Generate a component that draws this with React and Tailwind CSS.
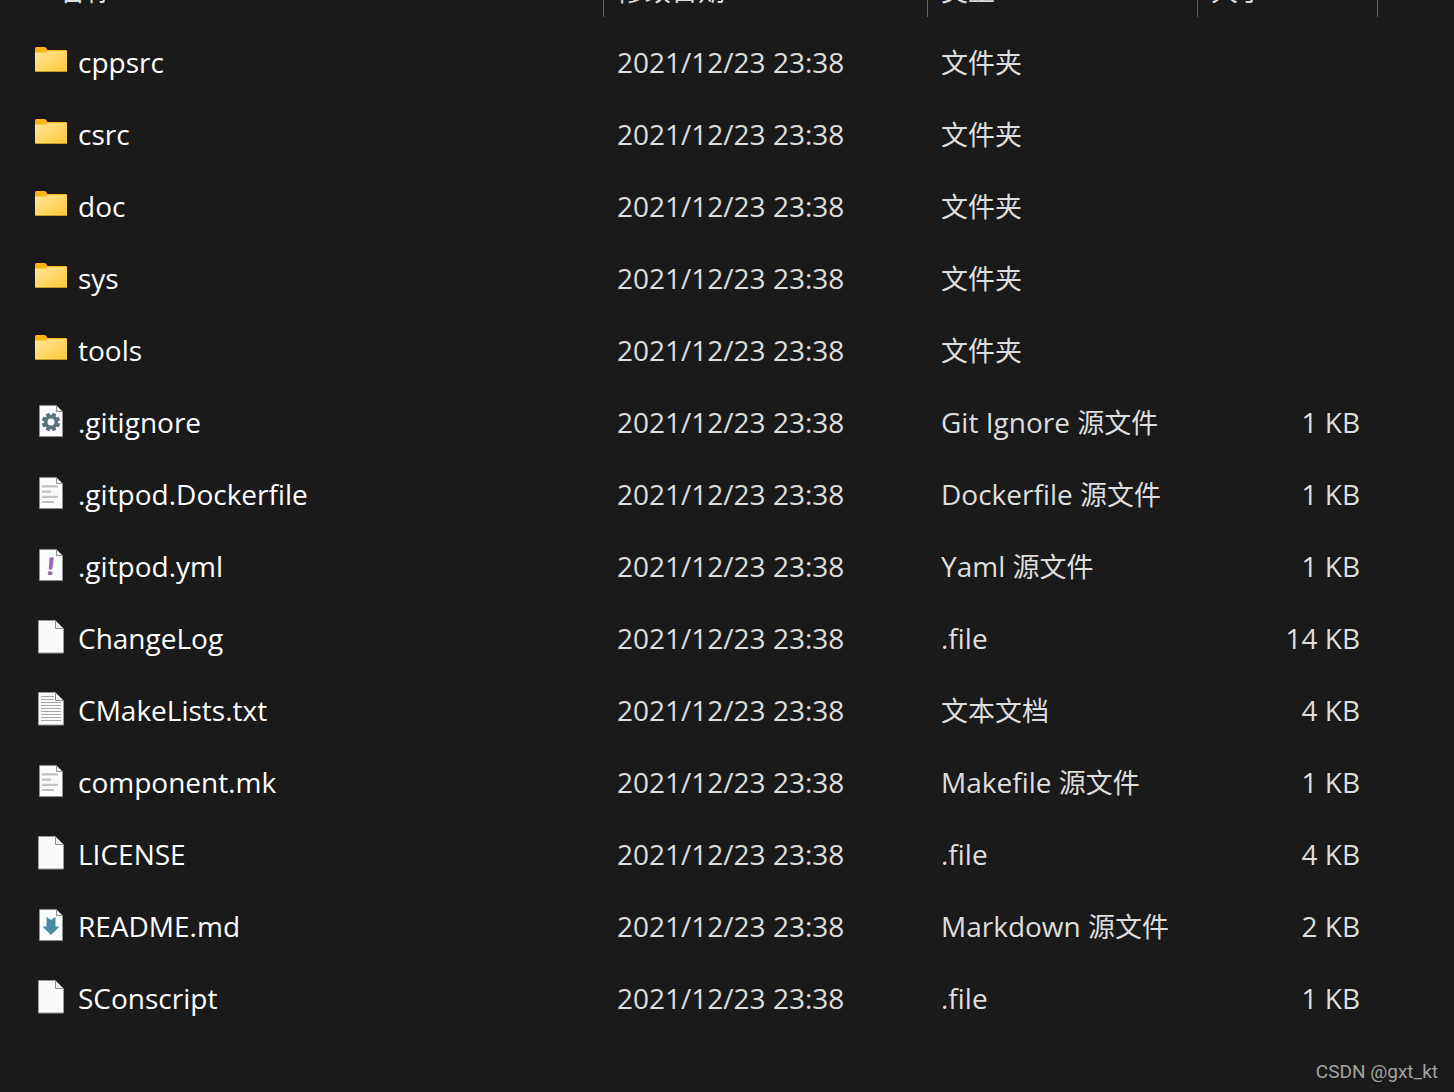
import React from "react";

const DATE = "2021/12/23 23:38";

const files = [
    { name: "cppsrc", icon: "folder", zh: "文件夹" },
    { name: "csrc", icon: "folder", zh: "文件夹" },
    { name: "doc", icon: "folder", zh: "文件夹" },
    { name: "sys", icon: "folder", zh: "文件夹" },
    { name: "tools", icon: "folder", zh: "文件夹" },
    { name: ".gitignore", icon: "gear", type: "Git Ignore ", zh: "源文件", size: "1 KB" },
    { name: ".gitpod.Dockerfile", icon: "code", type: "Dockerfile ", zh: "源文件", size: "1 KB" },
    { name: ".gitpod.yml", icon: "yaml", type: "Yaml ", zh: "源文件", size: "1 KB" },
    { name: "ChangeLog", icon: "blank", type: ".file", size: "14 KB" },
    { name: "CMakeLists.txt", icon: "text", zh: "文本文档", size: "4 KB" },
    { name: "component.mk", icon: "code", type: "Makefile ", zh: "源文件", size: "1 KB" },
    { name: "LICENSE", icon: "blank", type: ".file", size: "4 KB" },
    { name: "README.md", icon: "markdown", type: "Markdown ", zh: "源文件", size: "2 KB" },
    { name: "SConscript", icon: "blank", type: ".file", size: "1 KB" },
];

function Folder() {
    return (
        <>
            <defs>
                <linearGradient id="folder" x1="0" y1="0" x2="1" y2="1">
                    <stop offset="0" stopColor="#ffe69b" />
                    <stop offset="1" stopColor="#ffc937" />
                </linearGradient>
            </defs>
            <path d="M0 4.5Q0 3 1.5 3H9.5Q10.5 3 11.2 4L12.5 6H31Q32 6 32 7V12H0Z" fill="#fbb616" />
            <path d="M0 8.5H10L12.5 7H31.5Q32 7 32 8V26.5Q32 28 30.5 28H1.5Q0 28 0 26.5Z" fill="url(#folder)" />
            <path d="M0.3 27.5H31.7" stroke="#c99a2c" strokeWidth="1" />
        </>
    );
}

// page used by the editor's file types
function SmallPage({ children }) {
    return (
        <>
            <path d="M4.5 1.5H21.5L27.5 7.5V32.5H4.5Z" fill="#fafbfc" stroke="#8f8f8f" />
            <path d="M21.5 1.5V7.5H27.5Z" fill="#ededed" stroke="#8f8f8f" />
            {children}
        </>
    );
}

// page used by the system's own file types
function LargePage({ children }) {
    return (
        <>
            <path d="M3.5 0.5H20.5L28.5 8.5V33H3.5Z" fill="#fafafa" stroke="#9a9a9a" />
            <path d="M20.5 0.5V8.5H28.5Z" fill="#f4f4f4" stroke="#8a8a8a" />
            {children}
        </>
    );
}

function Gear() {
    return (
        <g transform="translate(16 18)" fill="#5e747c">
            {[22.5, 67.5, 112.5, 157.5].map((angle) => (
                <rect key={angle} x="-2" y="-9.2" width="4" height="18.4" rx="0.6" transform={`rotate(${angle})`} />
            ))}
            <circle r="7.2" />
            <circle r="3.5" fill="#fafbfc" />
        </g>
    );
}

function FileIcon({ type }) {
    return (
        <svg className="w-8 h-[34px] shrink-0" viewBox="0 0 32 34" aria-hidden="true">
            {type === "folder" && <Folder />}
            {type === "blank" && <LargePage />}
            {type === "gear" && <SmallPage><Gear /></SmallPage>}
            {type === "code" && (
                <SmallPage>
                    <path d="M7 10.3H23M7 15.6H16M7 20.8H23M7 26H19" stroke="#bfc1c2" strokeWidth="2.2" />
                </SmallPage>
            )}
            {type === "yaml" && (
                <SmallPage>
                    <path d="M14.6 9.5H18.9L17.2 21.5H13.8Z" fill="#9368b0" />
                    <ellipse cx="15.2" cy="25.3" rx="2.4" ry="2" fill="#9368b0" />
                </SmallPage>
            )}
            {type === "text" && (
                <LargePage>
                    <path
                        d="M6 4.5H19M6 7.5H19M6 10.5H26M6 13.5H26M6 16.5H26M6 19.5H26M6 22.5H26M6 25.5H26M6 28.5H26"
                        stroke="#a6a6a6"
                    />
                </LargePage>
            )}
            {type === "markdown" && (
                <SmallPage>
                    <path d="M11.5 9L16 12L20.5 9V18.5H24.5L16 27L7.5 18.5H11.5Z" fill="#478ba8" />
                </SmallPage>
            )}
        </svg>
    );
}

function HeaderCell({ label, className }) {
    return (
        <th className="p-0 align-top font-normal">
            <div className={`h-[17px] flex items-end border-r border-[#636363] pb-[13px] ${className}`}>
                <button className="text-[27px] leading-[27px]">{label}</button>
            </div>
        </th>
    );
}

function FileRow({ file }) {
    return (
        <tr className="h-[72px]">
            <td className="p-0 pl-[35px] text-white">
                <div className="flex items-center gap-[11px]">
                    <div className="pb-[2px]"><FileIcon type={file.icon} /></div>
                    <span>{file.name}</span>
                </div>
            </td>
            <td className="p-0 pl-[13px]">{DATE}</td>
            <td className="p-0 pl-[13px]">
                {file.type}
                {file.zh && <span className="text-[27px]">{file.zh}</span>}
            </td>
            <td className="p-0 pr-[18px] text-right">{file.size}</td>
            <td className="p-0"></td>
        </tr>
    );
}

function App() {
    return (
        <main className="min-h-screen overflow-hidden bg-[#1a1a1a] text-[#dedede] font-['Open_Sans','Noto_Sans_CJK_SC',sans-serif]">
            <table className="w-full table-fixed border-collapse text-[28px] leading-10 whitespace-nowrap">
                <colgroup>
                    <col className="w-[604px]" />
                    <col className="w-[324px]" />
                    <col className="w-[270px]" />
                    <col className="w-[180px]" />
                    <col />
                </colgroup>
                <thead>
                    <tr className="h-[26px]">
                        <HeaderCell label="名称" className="pl-[58px]" />
                        <HeaderCell label="修改日期" className="pl-[13px]" />
                        <HeaderCell label="类型" className="pl-[13px]" />
                        <HeaderCell label="大小" className="pl-[13px]" />
                        <th className="p-0"></th>
                    </tr>
                </thead>
                <tbody>
                    {files.map((file) => <FileRow key={file.name} file={file} />)}
                </tbody>
            </table>
            <footer className="pt-[26px] pr-4 text-right text-[19px] leading-6 text-[#a3a3a3] font-[Roboto,sans-serif]">
                CSDN @gxt_kt
            </footer>
        </main>
    );
}

export default App;
